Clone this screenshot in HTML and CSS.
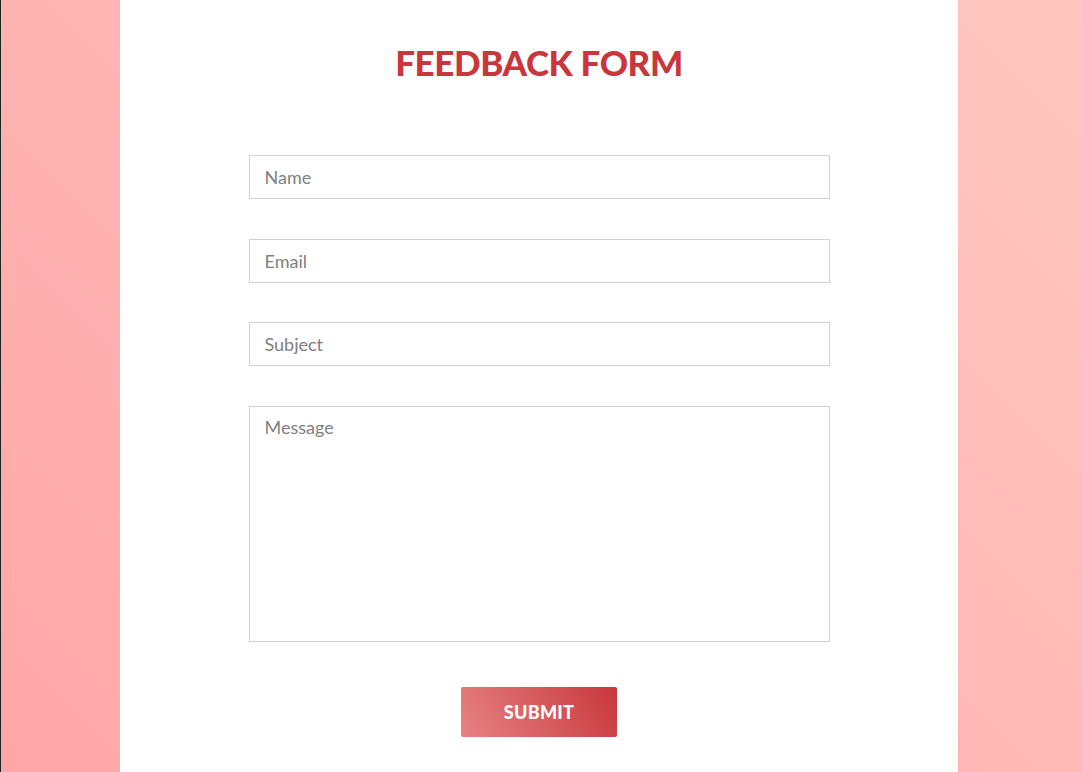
FILE: index.html
```html
<!DOCTYPE html>
<html lang="en">
<head>
<meta charset="utf-8">
<title>Feedback Form</title>
<link rel="stylesheet" href="styles.css">
</head>
<body>
<main class="card">
  <h1 class="title">FEEDBACK FORM</h1>
  <form class="form">
    <input class="field" type="text" placeholder="Name">
    <input class="field" type="email" placeholder="Email">
    <input class="field" type="text" placeholder="Subject">
    <textarea class="field area" placeholder="Message"></textarea>
    <button class="submit" type="button">SUBMIT</button>
  </form>
</main>
</body>
</html>
```
FILE: styles.css
```css
html, body {
  margin: 0;
  height: 100%;
}
body {
  background: linear-gradient(45deg, #ffa6a8 0%, #ffc7c0 100%);
  box-shadow: inset 1px 0 #222;
  font-family: Lato, "Liberation Sans", sans-serif;
  display: flex;
  justify-content: center;
}
.card {
  width: 838px;
  height: 100%;
  background: #fff;
  margin-left: -4px;
  box-sizing: border-box;
  padding-top: 40px;
}
.title {
  margin: 0;
  text-align: center;
  color: #c8373b;
  font-size: 35px;
  font-weight: 900;
  letter-spacing: -0.4px;
  line-height: 44px;
}
.form {
  width: 581px;
  margin: 71px auto 0;
  display: flex;
  flex-direction: column;
  align-items: center;
}
.field {
  width: 100%;
  height: 44px;
  box-sizing: border-box;
  border: 1px solid #d2d2d2;
  padding: 0 15px;
  font-family: inherit;
  font-size: 18px;
  color: #333;
  margin-bottom: 39.5px;
  outline: none;
}
.field::placeholder {
  color: #808080;
}
.area {
  height: 236px;
  padding-top: 9px;
  resize: none;
  margin-bottom: 45px;
}
.submit {
  width: 156px;
  height: 50px;
  border: none;
  border-radius: 2px;
  background: linear-gradient(60deg, #e78383 0%, #c8373b 100%);
  color: #fff;
  font-family: inherit;
  font-size: 18px;
  font-weight: 900;
  letter-spacing: 0.3px;
}
```
